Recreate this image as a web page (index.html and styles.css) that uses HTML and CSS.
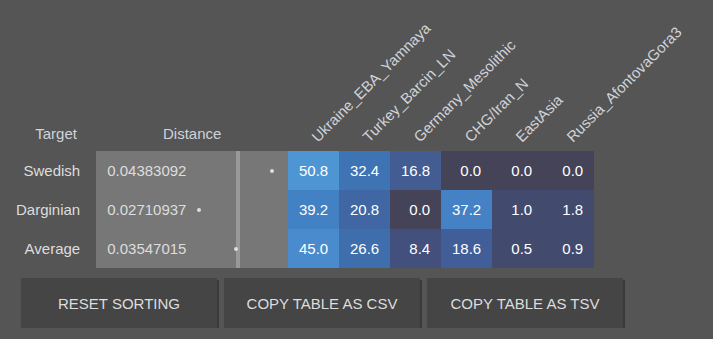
FILE: index.html
```html
<!DOCTYPE html>
<html lang="en">
<head>
    <meta charset="UTF-8">
    <meta name="viewport" content="width=device-width, initial-scale=1.0">
    <title>Distance Sheet</title>
    <link rel="stylesheet" href="styles.css">
</head>
<body>

    <div class="sheet">
        <table id="resultsTable">
            <thead>
                <tr>
                    <th class="col-target">Target</th>
                    <th class="col-distance">Distance</th>
                    <th class="col-source"><span>Ukraine_EBA_Yamnaya</span></th>
                    <th class="col-source"><span>Turkey_Barcin_LN</span></th>
                    <th class="col-source"><span>Germany_Mesolithic</span></th>
                    <th class="col-source"><span>CHG/Iran_N</span></th>
                    <th class="col-source"><span>EastAsia</span></th>
                    <th class="col-source"><span>Russia_AfontovaGora3</span></th>
                </tr>
            </thead>
            <tbody>
                <tr>
                    <td class="target">Swedish</td>
                    <td class="distance">0.04383092<i class="mean"></i><b class="dot" style="left: 174px"></b></td>
                    <td class="pct" style="background: #4e95d4">50.8</td>
                    <td class="pct" style="background: #3e73b4">32.4</td>
                    <td class="pct" style="background: #435d92">16.8</td>
                    <td class="pct" style="background: #454357">0.0</td>
                    <td class="pct" style="background: #454357">0.0</td>
                    <td class="pct" style="background: #454357">0.0</td>
                </tr>
                <tr>
                    <td class="target">Darginian</td>
                    <td class="distance">0.02710937<i class="mean"></i><b class="dot" style="left: 101px"></b></td>
                    <td class="pct" style="background: #4281c4">39.2</td>
                    <td class="pct" style="background: #4067a4">20.8</td>
                    <td class="pct" style="background: #454357">0.0</td>
                    <td class="pct" style="background: #4581c5">37.2</td>
                    <td class="pct" style="background: #424b6e">1.0</td>
                    <td class="pct" style="background: #424b6e">1.8</td>
                </tr>
                <tr>
                    <td class="target">Average</td>
                    <td class="distance">0.03547015<i class="mean"></i><b class="dot" style="left: 138px"></b></td>
                    <td class="pct" style="background: #4a8bcd">45.0</td>
                    <td class="pct" style="background: #3f6ead">26.6</td>
                    <td class="pct" style="background: #434f7c">8.4</td>
                    <td class="pct" style="background: #415e98">18.6</td>
                    <td class="pct" style="background: #424b6e">0.5</td>
                    <td class="pct" style="background: #424b6e">0.9</td>
                </tr>
            </tbody>
        </table>

        <div class="actions">
            <button type="button">Reset sorting</button>
            <button type="button">Copy table as CSV</button>
            <button type="button">Copy table as TSV</button>
        </div>
    </div>

</body>
</html>
```

FILE: styles.css
```css
body {
    margin: 0;
    background: #555555;
    font-family: "Liberation Sans", Arial, sans-serif;
    font-size: 15px;
    color: #dddddd;
}
.sheet {
    padding: 20px 0 0 16px;
}
table {
    border-collapse: collapse;
    table-layout: fixed;
}
th, td {
    padding: 0;
}
th {
    height: 131px;
    font-weight: normal;
    color: #cfd3da;
    vertical-align: bottom;
    padding-bottom: 9px;
    box-sizing: border-box;
}
.col-target {
    width: 80px;
}
.col-distance {
    width: 192px;
}
.col-source {
    width: 51px;
    position: relative;
}
.col-source span {
    position: absolute;
    left: 32px;
    bottom: 6px;
    white-space: nowrap;
    transform-origin: left bottom;
    transform: rotate(-45deg);
}
td {
    height: 39px;
}
.target {
    text-align: right;
    padding-right: 16px;
}
.distance {
    position: relative;
    background: #777777;
    padding-left: 11px;
}
.mean {
    position: absolute;
    top: 0;
    bottom: 0;
    left: 140px;
    width: 4px;
    background: #999999;
}
.dot {
    position: absolute;
    top: 50%;
    width: 4px;
    height: 4px;
    margin-top: -2px;
    border-radius: 50%;
    background: #dddddd;
}
.pct {
    color: #ffffff;
    text-align: right;
    padding-right: 11px;
}
.actions {
    display: flex;
    gap: 7px;
    margin: 10px 0 0 5px;
}
.actions button {
    width: 196px;
    height: 50px;
    background: #454545;
    color: #dddddd;
    border: none;
    box-shadow: 2px 2px 0 #3a3a3a;
    font-family: "Liberation Sans", Arial, sans-serif;
    font-size: 15px;
    text-transform: uppercase;
    cursor: pointer;
}
```
